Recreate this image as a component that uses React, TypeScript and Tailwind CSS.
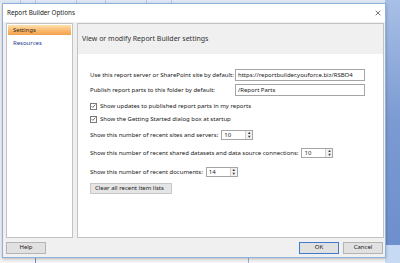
import { X } from "lucide-react";

const font = { fontFamily: '"Noto Sans", "Liberation Sans", sans-serif' };

function CheckRow({ label, mt }: { label: string; mt: string }) {
  return (
    <div className={`flex h-[10px] items-center gap-[3px] ${mt}`}>
      <span className="flex h-[7px] w-[7px] items-center justify-center border border-[#7a7a7a] bg-white">
        <svg viewBox="0 0 8 8" className="h-[6px] w-[6px]">
          <path d="M1 4.2 L3 6.2 L7 1.5" fill="none" stroke="#333" strokeWidth="1.1" />
        </svg>
      </span>
      <span>{label}</span>
    </div>
  );
}

function SpinRow({ label, value, mt }: { label: string; value: string; mt: string }) {
  return (
    <div className={`flex h-[10px] items-center gap-[3px] ${mt}`}>
      <span>{label}</span>
      <div className="flex h-[10px] w-[32px] border border-[#a5a5a5] bg-white">
        <span className="flex-1 pl-[2px] leading-[8px]">{value}</span>
        <div className="flex w-[7px] flex-col border-l border-[#d0d0d0] bg-[#f2f2f2]">
          <span className="flex flex-1 items-center justify-center text-[4px] leading-none text-[#333]">▲</span>
          <span className="flex flex-1 items-center justify-center text-[4px] leading-none text-[#333]">▼</span>
        </div>
      </div>
    </div>
  );
}

export default function App() {
  return (
    <div className="relative h-[263px] w-[400px] overflow-hidden bg-[#f4f4f4] text-[6px] text-[#202020]" style={font}>
      {/* ribbon strip behind the dialog */}
      <div className="flex h-[3px] gap-[40px] bg-[#dfe8f5] pl-[20px]">
        <div className="w-[16px] border-x border-[#b3c6e4]" />
        <div className="w-[30px] border-x border-[#b3c6e4]" />
        <div className="w-[26px] border-x border-[#b3c6e4]" />
      </div>

      {/* word window edge on the right */}
      <div className="absolute right-0 top-0 h-[245px] w-[15px] bg-gradient-to-b from-[#a8bfe6] via-[#7b9ad2] to-[#6d8fcd]" />
      <div className="absolute bottom-0 right-0 h-[18px] w-[15px] bg-[#c7daf3]" />
      <div className="absolute bottom-0 left-[35px] h-[8px] w-[1px] bg-[#6c90c8]" />
      <div className="absolute bottom-0 left-[248px] h-[8px] w-[1px] bg-[#9ab0d0]" />

      {/* dialog window */}
      <div className="absolute left-[2px] top-[3px] flex h-[255px] w-[384px] flex-col border border-[#8fb2dc] bg-[#f0f0f0] shadow-[0_1px_3px_rgba(0,0,0,0.25)]">
        <div className="flex h-[18px] items-center justify-between bg-white pl-[4px] pr-[3px]">
          <span className="text-[6.3px]">Report Builder Options</span>
          <X className="h-[8px] w-[8px] text-[#333]" strokeWidth={2} />
        </div>

        <div className="flex flex-1 gap-[4px] pl-[3px] pr-[1px] pt-[1px]">
          {/* left nav */}
          <div className="flex w-[67px] flex-col border border-[#c3c3c3] bg-white p-[1px]">
            <div className="flex h-[10px] items-center bg-gradient-to-b from-[#fde0b0] via-[#f9bd72] to-[#f4a04a] pl-[5px] text-[#3a2a10]">
              Settings
            </div>
            <div className="mt-[4px] pl-[5px] text-[#23408e]">Resources</div>
          </div>

          {/* settings panel */}
          <div className="flex flex-1 flex-col border border-[#c3c3c3] bg-white">
            <div className="flex h-[30px] items-center bg-[#f0f0f0] pl-[4px] text-[7px] text-[#333]">
              View or modify Report Builder settings
            </div>
            <div className="flex flex-col pl-[12px]">
              <div className="mt-[15px] flex h-[12px] items-center">
                <span className="w-[145px]">Use this report server or SharePoint site by default:</span>
                <div className="flex h-[12px] w-[130px] items-center border border-[#a5a5a5] bg-white pl-[2px]">
                  https://reportbuilder.youforce.biz/RSBO4
                </div>
              </div>
              <div className="mt-[3px] flex h-[12px] items-center">
                <span className="w-[145px]">Publish report parts to this folder by default:</span>
                <div className="flex h-[12px] w-[130px] items-center border border-[#a5a5a5] bg-white pl-[2px]">
                  /Report Parts
                </div>
              </div>
              <CheckRow mt="mt-[5px]" label="Show updates to published report parts in my reports" />
              <CheckRow mt="mt-[3px]" label="Show the Getting Started dialog box at startup" />
              <SpinRow mt="mt-[6px]" label="Show this number of recent sites and servers:" value="10" />
              <SpinRow mt="mt-[8px]" label="Show this number of recent shared datasets and data source connections:" value="10" />
              <SpinRow mt="mt-[9px]" label="Show this number of recent documents:" value="14" />
              <div className="mt-[6px] flex h-[11px] w-[82px] items-center border border-[#c8c8c8] bg-[#e5e5e5] pl-[4px]">
                Clear all recent item lists
              </div>
            </div>
          </div>
        </div>

        <div className="flex h-[19px] items-center pl-[3px] pr-[2px]">
          <div className="flex h-[12px] w-[40px] items-center justify-center border border-[#b4b4b4] bg-[#e1e1e1]">Help</div>
          <div className="ml-auto flex h-[12px] w-[40px] items-center justify-center border border-[#3d7bd0] bg-[#e1e1e1]">OK</div>
          <div className="ml-[4px] flex h-[12px] w-[40px] items-center justify-center border border-[#b4b4b4] bg-[#e1e1e1]">Cancel</div>
        </div>
      </div>
    </div>
  );
}
